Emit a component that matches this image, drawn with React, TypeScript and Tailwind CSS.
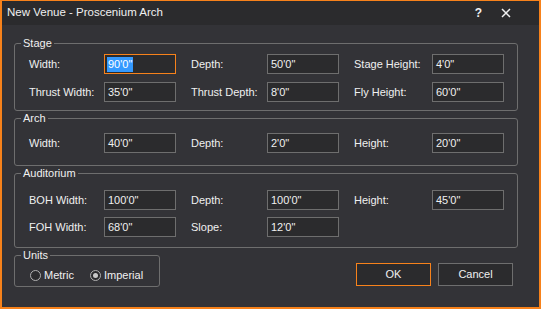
import React from "react";

const font = { fontFamily: '"Liberation Sans", Arial, sans-serif' };

function Field({ value, focused }: { value: string; focused?: boolean }) {
  return (
    <div
      className={`flex h-[20px] w-[72px] items-center border bg-[#2b2b2d] pl-[2px] text-[11px] text-[#f0f0f0] ${
        focused ? "border-[#f7821b]" : "border-[#6e6e6e]"
      }`}
    >
      {focused ? <span className="bg-[#3399ff] px-[1px] leading-[15px] text-white">{value}</span> : <span className="px-[1px]">{value}</span>}
    </div>
  );
}

function Label({ text }: { text: string }) {
  return <div className="flex h-[20px] items-center text-[11px] text-[#f0f0f0]">{text}</div>;
}

function Group({ title, className, children }: { title: string; className: string; children: React.ReactNode }) {
  return (
    <div className={`relative rounded-[3px] border border-[#6e6e6e] ${className}`}>
      <span className="absolute -top-[8px] left-[6px] bg-[#333337] px-[2px] text-[11px] leading-[14px] text-[#f0f0f0]">{title}</span>
      {children}
    </div>
  );
}

type Cell = [string, string, boolean?] | null;

function Row({ cells }: { cells: Cell[] }) {
  return (
    <div className="grid grid-cols-[75px_87px_76px_87px_78px_72px]">
      {cells.map((c, i) =>
        c ? (
          <React.Fragment key={i}>
            <Label text={c[0]} />
            <div>
              <Field value={c[1]} focused={c[2]} />
            </div>
          </React.Fragment>
        ) : (
          <React.Fragment key={i}>
            <div />
            <div />
          </React.Fragment>
        )
      )}
    </div>
  );
}

function Radio({ label, checked }: { label: string; checked?: boolean }) {
  return (
    <div className="flex items-center gap-[3px] text-[11px] text-[#f0f0f0]">
      <span className="flex h-[11px] w-[11px] items-center justify-center rounded-full border border-[#b0b0b0] bg-[#2b2b2d]">
        {checked ? <span className="h-[5px] w-[5px] rounded-full bg-[#c8c8c8]" /> : null}
      </span>
      <span>{label}</span>
    </div>
  );
}

export default function App() {
  return (
    <div className="h-[309px] w-[541px] overflow-hidden border-x-2 border-b-2 border-t border-[#f7821b] bg-[#333337]" style={font}>
      <div className="flex h-[24px] items-center justify-between bg-[#2b2b2d] pl-[5px] pr-[28px]">
        <span className="text-[11.5px] text-[#f0f0f0]">New Venue - Proscenium Arch</span>
        <div className="flex items-center gap-[19px] text-[#f0f0f0]">
          <span className="text-[12px] font-bold">?</span>
          <svg width="10" height="10" viewBox="0 0 10 10">
            <path d="M1 1 L9 9 M9 1 L1 9" stroke="#f0f0f0" strokeWidth="1.5" />
          </svg>
        </div>
      </div>

      <div className="pl-[12px]">
        <Group title="Stage" className="mt-[18px] w-[504px] pb-[8px] pl-[14px] pt-[10px]">
          <div className="flex flex-col gap-[8px]">
            <Row cells={[["Width:", "90'0\"", true], ["Depth:", "50'0\""], ["Stage Height:", "4'0\""]]} />
            <Row cells={[["Thrust Width:", "35'0\""], ["Thrust Depth:", "8'0\""], ["Fly Height:", "60'0\""]]} />
          </div>
        </Group>

        <Group title="Arch" className="mt-[7px] w-[504px] pb-[12px] pl-[14px] pt-[14px]">
          <Row cells={[["Width:", "40'0\""], ["Depth:", "2'0\""], ["Height:", "20'0\""]]} />
        </Group>

        <Group title="Auditorium" className="mt-[7px] w-[504px] pb-[10px] pl-[14px] pt-[16px]">
          <div className="flex flex-col gap-[7px]">
            <Row cells={[["BOH Width:", "100'0\""], ["Depth:", "100'0\""], ["Height:", "45'0\""]]} />
            <Row cells={[["FOH Width:", "68'0\""], ["Slope:", "12'0\""], null]} />
          </div>
        </Group>

        <div className="mt-[7px] flex items-start">
          <Group title="Units" className="h-[32px] w-[146px] pl-[15px] pt-[11px]">
            <div className="flex items-center gap-[16px]">
              <Radio label="Metric" />
              <Radio label="Imperial" checked />
            </div>
          </Group>
          <div className="ml-[196px] mt-[8px] flex gap-[7px]">
            <button className="h-[23px] w-[75px] border border-[#f7821b] bg-[#2b2b2d] text-[11px] text-[#f0f0f0]">OK</button>
            <button className="h-[23px] w-[75px] border border-[#6e6e6e] bg-[#2b2b2d] text-[11px] text-[#f0f0f0]">Cancel</button>
          </div>
        </div>
      </div>
    </div>
  );
}
